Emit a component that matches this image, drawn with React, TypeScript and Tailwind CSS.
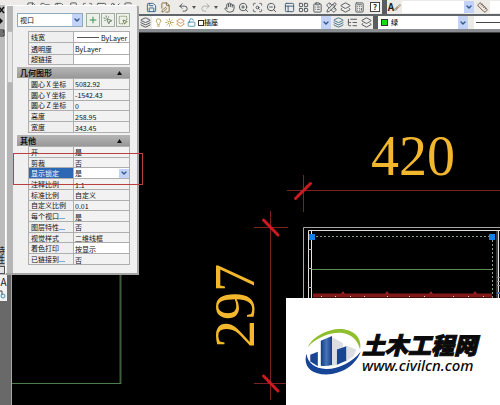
import React from "react";
import {
  Calculator,
  ChevronDown,
  CopyPlus,
  FilePen,
  Hand,
  Layers,
  Layers2,
  LayoutGrid,
  Lightbulb,
  ListTree,
  LucideIcon,
  MousePointerClick,
  PanelsTopLeft,
  PencilRuler,
  Plus,
  Redo2,
  Ruler,
  Save,
  Sheet,
  SquareDashedMousePointer,
  Sun,
  Undo2,
  LockOpen,
  Scissors,
  ClipboardList,
  Brush,
  ZoomIn,
  ZoomOut,
  ScanSearch,
  Folder,
  Printer,
  File,
} from "lucide-react";
import clsx from "clsx";

type Property = {
  name: string;
  value: string;
  editable?: boolean;
  line?: boolean;
  selected?: boolean;
};

const GENERAL: Property[] = [
  { name: "线宽", value: "ByLayer", editable: true, line: true },
  { name: "透明度", value: "ByLayer", editable: true },
  { name: "超链接", value: "", editable: true },
];

const GEOMETRY: Property[] = [
  { name: "圆心 X 坐标", value: "5082.92" },
  { name: "圆心 Y 坐标", value: "-1542.43" },
  { name: "圆心 Z 坐标", value: "0" },
  { name: "高度", value: "258.95" },
  { name: "宽度", value: "343.45" },
];

const MISC: Property[] = [
  { name: "开", value: "是" },
  { name: "剪裁", value: "否" },
  { name: "显示锁定", value: "是", editable: true, selected: true },
  { name: "注释比例", value: "1:1" },
  { name: "标准比例", value: "自定义" },
  { name: "自定义比例", value: "0.01" },
  { name: "每个视口...", value: "是" },
  { name: "图层特性...", value: "否" },
  { name: "视觉样式", value: "二维线框" },
  { name: "着色打印", value: "按显示", editable: true },
  { name: "已链接到...", value: "否" },
];

interface ToolProps {
  icon: LucideIcon;
  label: string;
  className?: string;
}

const Tool: React.FC<ToolProps> = ({ icon: Icon, label, className }) => (
  <button
    type="button"
    aria-label={label}
    className={clsx(
      "flex w-[14px] shrink-0 items-center justify-center",
      className ?? "text-[#4c5258]",
    )}
  >
    <Icon className="size-[11px]" strokeWidth={2} />
  </button>
);

interface PickerProps {
  label: string;
  value: string;
  className?: string;
  selectClassName?: string;
  children?: React.ReactNode;
}

const Picker: React.FC<PickerProps> = ({
  label,
  value,
  className,
  selectClassName,
  children,
}) => (
  <div className={clsx("relative flex bg-white", className)}>
    <select
      aria-label={label}
      className={clsx(
        "w-full appearance-none bg-transparent pr-3 text-[#111] outline-none",
        selectClassName,
      )}
    >
      <option>{value}</option>
    </select>
    {children}
    <span className="pointer-events-none absolute inset-y-0 right-0 flex w-[10px] items-center justify-center bg-[#c3d3f7] text-[#34548c]">
      <ChevronDown className="size-2" strokeWidth={4} />
    </span>
  </div>
);

const Caret = () => (
  <svg viewBox="0 0 4 3" className="mx-[2px] h-[3px] w-1 shrink-0 self-center">
    <path d="M0 0h4L2 3z" fill="#555" />
  </svg>
);

const HelpTool = () => (
  <button
    type="button"
    className="mr-[2px] ml-1 h-[10px] w-[10px] shrink-0 self-center border border-[#444] bg-white text-[8px] leading-[8px] font-bold text-[#333]"
  >
    ?
  </button>
);

const Toolbars = () => (
  <header className="shrink-0 bg-[#62666b]">
    <div className="flex h-[14px] overflow-hidden bg-[#ecebe7]">
      <div className="flex w-[144px] shrink-0 pl-6">
        <Tool icon={File} label="新建" />
        <Tool icon={Folder} label="打开" />
        <Tool icon={Save} label="保存" />
        <Tool icon={Printer} label="打印" />
        <Tool icon={ScanSearch} label="预览" />
        <Tool icon={Sheet} label="发布" />
        <Tool icon={Scissors} label="剪切" />
        <Tool icon={CopyPlus} label="复制" />
      </div>
      <Tool icon={Save} label="特性匹配" className="text-[#2d5f94]" />
      <Tool icon={FilePen} label="块编辑器" className="text-[#80683a]" />
      <div className="w-1 shrink-0" />
      <Tool icon={Undo2} label="放弃" />
      <Caret />
      <Tool icon={Redo2} label="重做" className="text-[#aaa]" />
      <Caret />
      <div className="w-[2px] shrink-0" />
      <Tool icon={Hand} label="平移" />
      <Tool icon={ZoomIn} label="实时缩放" />
      <Tool icon={ScanSearch} label="窗口缩放" />
      <Tool icon={ZoomOut} label="缩放上一个" />
      <div className="w-1 shrink-0" />
      <Tool icon={PanelsTopLeft} label="特性" className="text-[#3d5876]" />
      <Tool icon={LayoutGrid} label="设计中心" />
      <Tool icon={ClipboardList} label="工具选项板" />
      <Tool icon={PencilRuler} label="图纸集" />
      <Tool icon={Layers2} label="标记集" />
      <Tool icon={Calculator} label="计算器" />
      <HelpTool />
      <div className="w-[5px] shrink-0 bg-[#5a5c60]" />
      <button
        type="button"
        className="flex w-[15px] shrink-0 items-center justify-center text-[10px] leading-[14px] font-bold text-[#222]"
      >
        A
        <Brush className="size-[7px] text-[#80602c]" />
      </button>
      <Picker
        label="文字样式"
        value=""
        className="my-px w-[72px] shrink-0"
        selectClassName="text-[7px]"
      />
      <Tool icon={Ruler} label="标注样式" className="mx-px text-[#6c4a34]" />
      <div className="my-px flex-1 bg-white" />
    </div>

    <div className="mt-[2px] flex h-[13px] overflow-hidden bg-[#ecebe7]">
      <div className="w-[138px] shrink-0" />
      <Tool icon={Layers} label="图层特性" />
      <Picker
        label="图层"
        value="插座"
        className="w-[179px] shrink-0"
        selectClassName="pl-[52px] text-[7px] font-medium"
      >
        <span className="pointer-events-none absolute inset-y-0 left-[2px] flex items-center gap-[2px]">
          <Lightbulb className="size-[9px] text-[#a08a20]" />
          <Sun className="size-[9px] text-[#a08a20]" />
          <Layers2 className="size-[9px] text-[#bd7a34]" />
          <LockOpen className="size-[9px] text-[#237aa0]" />
          <i className="size-[6px] border border-[#333]" />
        </span>
      </Picker>
      <Tool icon={Layers} label="置为当前" className="text-[#3c6f86]" />
      <Tool icon={ListTree} label="上一个图层" />
      <Tool icon={Layers2} label="图层状态" />
      <div className="w-[5px] shrink-0 bg-[#5a5c60]" />
      <Picker
        label="颜色"
        value="绿"
        className="w-[90px] shrink-0"
        selectClassName="pl-[13px] text-[7px] font-medium"
      >
        <span className="pointer-events-none absolute top-[3px] left-[3px] size-[7px] border border-[#333] bg-[#12dc12]" />
      </Picker>
      <div className="ml-[6px] flex flex-1 items-center bg-white pl-[2px]">
        <span className="h-px w-full bg-[#444]" />
      </div>
    </div>
    <div className="h-[4px] border-b border-[#3c3e40] bg-[#888c90]" />
  </header>
);

const PropertyTable: React.FC<{ rows: Property[]; className: string }> = ({
  rows,
  className,
}) => (
  <table
    className={clsx(
      "ml-[11px] w-[102px] table-fixed border-collapse text-[7px] leading-[8px] text-[#111]",
      className,
    )}
  >
    <tbody>
      {rows.map((row) => (
        <tr key={row.name}>
          <th
            scope="row"
            className={clsx(
              "w-[45px] overflow-hidden border border-[#aeaeae] p-0 pl-[2px] text-left font-normal whitespace-nowrap",
              row.selected ? "bg-[#2c68b4] text-white" : "bg-[#efefef]",
            )}
          >
            {row.name}
          </th>
          <td
            className={clsx(
              "border border-[#aeaeae] p-0 whitespace-nowrap",
              row.editable ? "bg-white" : "bg-[#f2f2f2]",
            )}
          >
            {row.selected ? (
              <Picker
                label={row.name}
                value={row.value}
                selectClassName="pl-px leading-[9px]"
              />
            ) : (
              <span className="flex items-center pt-px pl-px">
                {row.line && <i className="mx-[2px] h-px w-[22px] bg-[#555]" />}
                {row.value}
              </span>
            )}
          </td>
        </tr>
      ))}
    </tbody>
  </table>
);

const SectionHeader: React.FC<{ title: string }> = ({ title }) => (
  <button
    type="button"
    className="mt-[2px] flex h-[11px] w-full items-center justify-between bg-gradient-to-b from-[#b6b6b6] to-[#989898] pr-2 pl-[3px] text-[8px] leading-[11px] font-bold text-[#111]"
  >
    {title}
    <svg viewBox="0 0 5 4" className="h-1 w-[5px]">
      <path d="M0 4h5L2.500 0z" fill="#111" />
    </svg>
  </button>
);

const PanelButton: React.FC<ToolProps> = ({ icon: Icon, label, className }) => (
  <button
    type="button"
    aria-label={label}
    className={clsx(
      "ml-px flex size-[14px] items-center justify-center border border-[#9fae9f] bg-[#edf1ea]",
      className,
    )}
  >
    <Icon className="size-[10px]" strokeWidth={2} />
  </button>
);

const PropertiesPanel = () => (
  <aside className="absolute top-[5px] left-0 flex h-[270px] w-[139px] text-[#222]">
    <div className="flex w-[5px] flex-col items-end overflow-hidden bg-[#bcbcbc]">
      <svg viewBox="0 0 5 34" className="h-[34px] w-[5px]">
        <path d="M-1 2l5 6M-1 8l5-6" stroke="#111" strokeWidth="1.500" />
        <path d="M0 13l3 3-3 3z" fill="#111" />
        <path d="M0 25h4v6H0M0 27h4M0 29h3" stroke="#222" fill="none" />
      </svg>
      <span className="mt-auto text-[9px] leading-[9px] [writing-mode:vertical-rl]">
        特性
      </span>
      <i className="mt-[2px] mb-px h-2 w-[7px] shrink-0 border border-[#555] bg-[#e4e4e4]" />
    </div>
    <div className="flex flex-1 rounded-t-[3px] border border-r-2 border-b-2 border-white border-r-[#a4a4a4] border-b-[#a4a4a4] bg-[#f0f0f0]">
      <div className="ml-px w-[6px] bg-[#b5b5b5] pt-[25px]">
        <div className="h-[52px] border border-[#bdbdbd] bg-[#e6e6e6]" />
      </div>
      <div className="flex-1 pt-[7px] pr-[7px] pl-1">
        <div className="flex">
          <Picker
            label="对象类型"
            value="视口"
            className="mr-[2px] h-[14px] flex-1 border border-[#8fa9bd]"
            selectClassName="pl-[2px] text-[7px]"
          />
          <PanelButton icon={Plus} label="添加选择" className="text-[#18823a]" />
          <PanelButton
            icon={MousePointerClick}
            label="选择对象"
            className="text-[#4a674a]"
          />
          <PanelButton
            icon={SquareDashedMousePointer}
            label="快速选择"
            className="text-[#5c6c38]"
          />
        </div>
        <PropertyTable rows={GENERAL} className="mt-[4px] h-[34px]" />
        <SectionHeader title="几何图形" />
        <PropertyTable rows={GEOMETRY} className="h-[55px]" />
        <SectionHeader title="其他" />
        <PropertyTable rows={MISC} className="h-[119px]" />
      </div>
    </div>
  </aside>
);

const Tick: React.FC<{ d: string }> = ({ d }) => (
  <path d={d} stroke="#cc1a20" strokeWidth="3" strokeLinecap="round" />
);

const BAND_MARKS = [321, 335, 350, 364, 387, 409, 424, 453, 468, 483];
const BAND_PEAKS = [343, 387, 431, 475];

const Drawing = () => (
  <svg
    viewBox="12 33 488 372"
    preserveAspectRatio="xMinYMin meet"
    fill="none"
    className="block w-full"
  >
    <path d="M120.500 33V384" stroke="#405a42" strokeWidth="2" />
    <path d="M12 383.500H121" stroke="#4d7d4d" />

    <g stroke="#7c2020">
      <path d="M287 190.500H500M303.500 175V212" />
      <path d="M270.500 211V400M254 227.500H288M254 383.500H288" />
    </g>
    <Tick d="M295.500 198.500L310.500 183.500" />
    <Tick d="M263.500 220L278 235" />
    <Tick d="M263.500 376L278 391" />

    <g fill="#f2b72c" fontSize="56" fontFamily="Liberation Serif, serif">
      <text x="371" y="175">
        420
      </text>
      <text transform="translate(254 348) rotate(-90)">297</text>
    </g>

    <path d="M303.500 298V227.500H500" stroke="#a8a8a8" />
    <path d="M308.500 298V230.500H500" stroke="#e2ddd6" />
    <path d="M311.500 231V298M498.500 231V298" stroke="#e6e6e6" />
    <path d="M497 231V298" stroke="#777" />
    <path d="M308 249.500h4M308 268.500h4M308 287.500h4" stroke="#bbb" />
    <path
      d="M312 236.500H492.500V298"
      stroke="#83a283"
      strokeDasharray="2 2"
    />
    <path d="M312 269.500H492" stroke="#5c8a58" />
    <path d="M497 277.500h3M497 281.500h3M497 285.500h3" stroke="#888" />
    <path d="M497 293h3" stroke="#3a6fb8" strokeWidth="2" />

    <path d="M313 295.500H492" stroke="#821818" strokeWidth="4" />
    {BAND_PEAKS.map((x) => (
      <path key={x} d={`M${x - 2} 294l2-3 2 3z`} fill="#a02020" />
    ))}
    {BAND_MARKS.map((x) => (
      <path key={x} d={`M${x} 296.500h1`} stroke="#dcd2bc" />
    ))}

    <path d="M309 234h6v6h-6zM489 234h6v6h-6z" fill="#1580e6" />
  </svg>
);

const SiteBadge = () => (
  <div className="absolute right-0 bottom-0 flex h-[107px] w-[214px] items-center bg-white pl-[18px]">
    <svg viewBox="58 92 176 148" className="h-[49px] w-[58px] shrink-0">
      <defs>
        <linearGradient id="tower" x1="0" x2="1">
          <stop offset="0" stopColor="#123c86" />
          <stop offset="0.500" stopColor="#4674b4" />
          <stop offset="1" stopColor="#153f8c" />
        </linearGradient>
      </defs>
      <path d="M143 122l33 18v12l-16 8v46l-17 4z" fill="#dcdee2" />
      <path d="M185 148l32 12-8 20-24 16z" fill="#dcdee2" />
      <path d="M77 176l23-9v44l-23-15z" fill="#1a4690" />
      <path d="M109 133l34-14v88q-17 4-34 2z" fill="url(#tower)" />
      <path d="M158 160l28-10v44l-28 12z" fill="#1a4690" />
      <path
        d="M70 152C86 118 140 92 182 99C218 106 234 130 228 160C222 134 204 114 175 110C138 106 96 124 70 152z"
        fill="#8fbf2c"
      />
      <path
        d="M66 173C54 206 76 236 125 236C176 234 216 206 230 166C205 200 160 220 125 219C90 218 68 200 66 173z"
        fill="#164496"
      />
    </svg>
    <div className="whitespace-nowrap text-[#0a0a0a] italic">
      <div className="text-[23px] leading-[26px] font-black [-webkit-text-stroke:1px_#0a0a0a]">
        土木工程网
      </div>
      <a
        href="#"
        className="block font-['Noto_Sans'] text-[15px] leading-[16px] font-medium"
      >
        www.civilcn.com
      </a>
    </div>
  </div>
);

export default function App() {
  return (
    <div className="relative flex min-h-screen flex-col overflow-hidden bg-black font-['Noto_Sans_CJK_SC',sans-serif]">
      <Toolbars />
      <div className="flex flex-1">
        <nav className="flex w-[12px] shrink-0 flex-col border-r border-[#a5a8a5] bg-[#696969] pt-[242px]">
          <button
            type="button"
            className="h-[13px] w-[7px] overflow-hidden bg-[#f2f2f2] text-[10px] leading-[13px] text-[#222]"
          >
            A
          </button>
          <button
            type="button"
            aria-label="修订"
            className="h-[13px] w-[7px] overflow-hidden bg-[#f2f2f2]"
          >
            <svg viewBox="0 0 7 13" className="h-[13px] w-[7px]" fill="none">
              <path d="M0 3h2v4" stroke="#444" />
              <circle cx="3" cy="8" r="2" stroke="#3f8cc0" />
            </svg>
          </button>
        </nav>
        <main className="flex-1">
          <Drawing />
        </main>
      </div>
      <PropertiesPanel />
      <div className="pointer-events-none absolute top-[153px] left-[13px] h-[32px] w-[130px] border border-[#b84040]" />
      <SiteBadge />
    </div>
  );
}
